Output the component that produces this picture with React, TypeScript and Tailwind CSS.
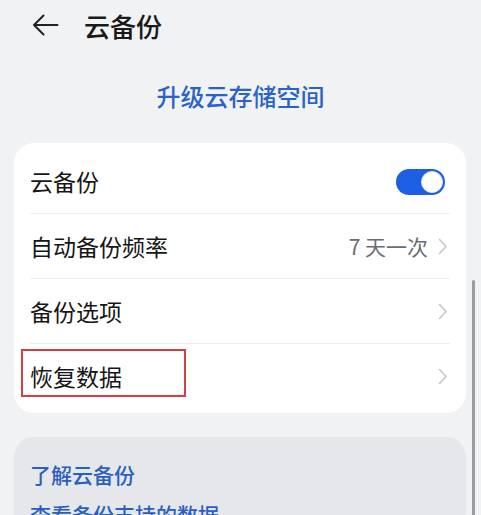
import { useState } from "react";

const font = { fontFamily: '"Noto Sans CJK SC", "Noto Sans", sans-serif' };

function Chevron() {
  return (
    <svg width="10" height="17" viewBox="0 0 10 17" fill="none" className="shrink-0">
      <path d="M1.5 1.5L8 8.5L1.5 15.5" stroke="#c4c6ca" strokeWidth="1.6" strokeLinecap="round" strokeLinejoin="round" />
    </svg>
  );
}

function Toggle({ on, onChange }: { on: boolean; onChange: () => void }) {
  return (
    <button
      onClick={onChange}
      className={`relative mr-[3px] h-[26px] w-[49px] rounded-full ${on ? "bg-[#1d5fe4]" : "bg-[#c9cbcf]"}`}
    >
      <span
        className={`absolute top-[2px] h-[22px] w-[22px] rounded-full border-[1.5px] border-[#dfe6f4] bg-white ${on ? "right-[2px]" : "left-[2px]"}`}
      />
    </button>
  );
}

function Row({ label, value, last, children }: { label: string; value?: string; last?: boolean; children?: React.ReactNode }) {
  return (
    <div className="relative flex h-[65px] items-center justify-between pl-[16px] pr-[18px]">
      <span className="text-[23px] text-[#161616]">{label}</span>
      <div className="flex items-center gap-[10px]">
        {value ? <span className="text-[21px] text-[#6b6c6f]">{value}</span> : null}
        {children ?? <Chevron />}
      </div>
      {!last ? <div className="absolute bottom-0 left-[16px] right-[16px] h-px bg-[#eceef0]" /> : null}
    </div>
  );
}

export default function App() {
  const [backup, setBackup] = useState(true);

  return (
    <div className="relative h-[515px] w-[481px] overflow-hidden bg-[#f1f2f4]" style={font}>
      <header className="flex h-[50px] items-center pl-[32px]">
        <svg width="27" height="22" viewBox="0 0 27 22" fill="none">
          <path d="M25.5 11H2M11.5 1.5L2 11l9.5 9.5" stroke="#222" strokeWidth="2" strokeLinecap="round" strokeLinejoin="round" />
        </svg>
        <h1 className="ml-[25px] text-[26px] font-medium text-[#1a1a1a]">云备份</h1>
      </header>

      <div className="flex h-[93px] items-center justify-center pb-[2px]">
        <span className="text-[24px] font-medium text-[#2a63c8]">升级云存储空间</span>
      </div>

      <section className="mx-[14px] w-[452px] rounded-[20px] bg-white pb-[4px] pt-[6px]">
        <Row label="云备份">
          <Toggle on={backup} onChange={() => setBackup(!backup)} />
        </Row>
        <Row label="自动备份频率" value="7 天一次" />
        <Row label="备份选项" />
        <div className="relative">
          <Row label="恢复数据" last />
          <div className="pointer-events-none absolute left-[7px] top-[5px] h-[48px] w-[165px] border-2 border-[#d2413f]" />
        </div>
      </section>

      <section className="mx-[14px] mt-[24px] w-[452px] rounded-[20px] bg-[#e6e7ea] px-[16px] pt-[20px]">
        <p className="text-[21px] font-medium leading-[34px] text-[#2a5fc2]">了解云备份</p>
        <p className="mt-[6px] text-[21px] font-medium leading-[34px] text-[#2a5fc2]">查看备份支持的数据</p>
      </section>

      <div className="absolute right-[6px] top-[280px] h-[260px] w-[3px] rounded-full bg-[#9c9da0]" />
    </div>
  );
}
